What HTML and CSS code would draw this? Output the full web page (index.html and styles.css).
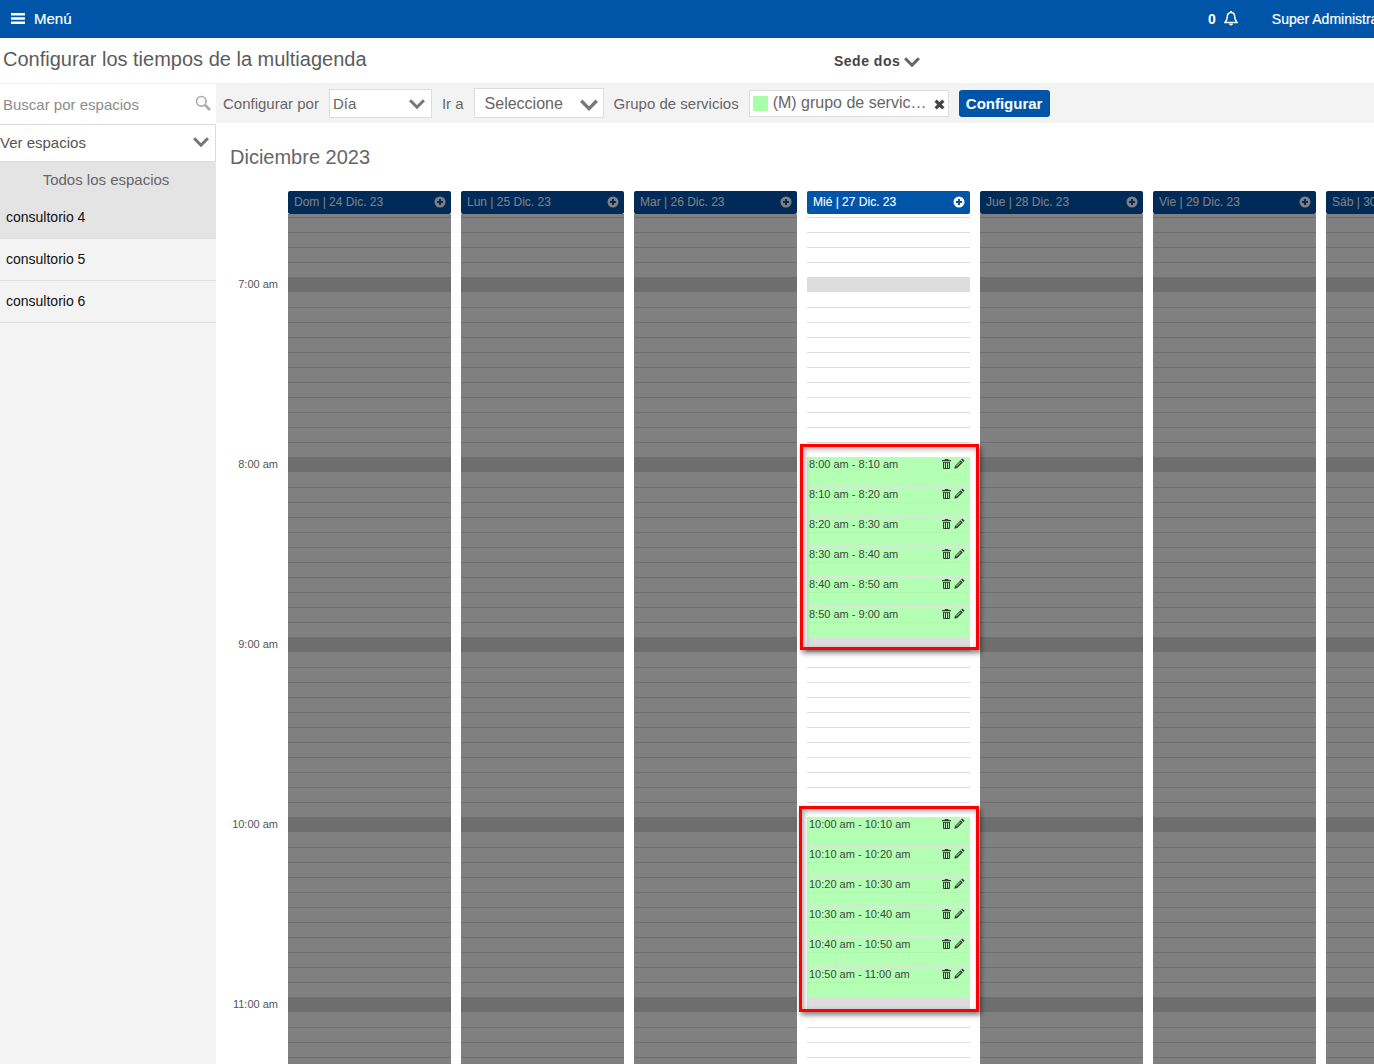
FILE: index.html
```html
<!DOCTYPE html>
<html lang="es">
<head>
<meta charset="utf-8">
<title>Configurar los tiempos de la multiagenda</title>
<link rel="stylesheet" href="styles.css">
</head>
<body>
<svg class="defs" width="0" height="0" aria-hidden="true">
  <symbol id="chev" viewBox="0 0 16 10"><path d="M1.100 1.200 8 8.200l6.900-7" fill="none" stroke="currentColor" stroke-width="3"/></symbol>
  <symbol id="plus" viewBox="0 0 12 12"><path fill-rule="evenodd" fill="currentColor" d="M6 .5a5.500 5.500 0 1 0 0 11 5.500 5.500 0 0 0 0-11zM5 3h2v2h2v2H7v2H5V7H3V5h2z"/></symbol>
  <symbol id="trash" viewBox="0 0 9 10"><path fill="currentColor" fill-rule="evenodd" d="M3 0h3l.5 1H9v1.200H0V1h2.500zM1 3h7v6.200L7.300 10H1.700L1 9.200zM2 3.800v5.300h.9V3.800zM4 3.800v5.300h1V3.800zM6.100 3.800v5.300H7V3.800z"/></symbol>
  <symbol id="pencil" viewBox="0 0 11 11"><path fill="currentColor" fill-rule="evenodd" d="M8.300.4l2.300 2.300-1.200 1.200-2.300-2.300zM6.500 2.200l2.300 2.300-5.600 5.600-2.900.7.700-2.900zM6.300 3.700L2 8l.5.500 4.300-4.300z"/></symbol>
</svg>

<header class="topbar">
  <div class="menu">
    <svg class="burger" viewBox="0 0 14 11" aria-hidden="true"><path fill="currentColor" d="M0 0h14v2.600H0zM0 4.200h14v2.600H0zM0 8.400h14V11H0z"/></svg>
    <span>Menú</span>
  </div>
  <div class="user">
    <span class="count">0</span>
    <svg class="bell" viewBox="0 0 14 15" aria-hidden="true"><path fill="none" stroke="currentColor" stroke-width="1.500" d="M7 1.500c-2.700 0-3.700 2-3.700 4.200 0 3-1.100 4.300-2.300 5.800h12c-1.200-1.500-2.300-2.800-2.300-5.800C10.700 3.500 9.700 1.500 7 1.500z"/><path fill="currentColor" d="M5 12.500h4a2 2 0 0 1-4 0zM6 0h2v1.500H6z"/></svg>
    <span class="name">Super Administrador</span>
  </div>
</header>

<div class="titlebar">
  <h1>Configurar los tiempos de la multiagenda</h1>
  <div class="sede">Sede dos <svg class="sede-chev"><use href="#chev"/></svg></div>
</div>

<div class="layout">
  <aside class="side">
    <div class="search">
      <span>Buscar por espacios</span>
      <svg class="lens" viewBox="0 0 16 16" aria-hidden="true"><circle cx="6.300" cy="6.300" r="4.800" fill="none" stroke="currentColor" stroke-width="1.600"/><path d="M10 10l5 5" stroke="currentColor" stroke-width="2.600"/></svg>
    </div>
    <div class="see">
      <span>Ver espacios</span>
      <svg class="side-chev"><use href="#chev"/></svg>
    </div>
    <div class="all">Todos los espacios</div>
    <ul class="rooms">
      <li class="room active">consultorio 4</li>
      <li class="room">consultorio 5</li>
      <li class="room">consultorio 6</li>
    </ul>
  </aside>

  <main class="content">
    <div class="tools">
      <span class="lbl">Configurar por</span>
      <div class="sel sel-day">Día <svg class="sel-chev"><use href="#chev"/></svg></div>
      <span class="lbl">Ir a</span>
      <div class="sel sel-go">Seleccione <svg class="sel-chev"><use href="#chev"/></svg></div>
      <span class="lbl">Grupo de servicios</span>
      <div class="group">
        <i class="swatch"></i>
        <span class="group-text">(M) grupo de servicios</span>
        <svg class="close" viewBox="0 0 10 10" aria-hidden="true"><path d="M1.500 1.500l7 7M8.500 1.500l-7 7" stroke="currentColor" stroke-width="3"/></svg>
      </div>
      <button class="go" type="button">Configurar</button>
    </div>

    <h2>Diciembre 2023</h2>

    <div class="cal">
      <div class="hours">
        <div class="hour">7:00 am</div>
        <div class="hour">8:00 am</div>
        <div class="hour">9:00 am</div>
        <div class="hour">10:00 am</div>
        <div class="hour">11:00 am</div>
      </div>

      <section class="day off">
        <div class="day-head"><span>Dom | 24 Dic. 23</span><svg class="add"><use href="#plus"/></svg></div>
        <div class="grid"></div>
      </section>
      <section class="day off">
        <div class="day-head"><span>Lun | 25 Dic. 23</span><svg class="add"><use href="#plus"/></svg></div>
        <div class="grid"></div>
      </section>
      <section class="day off">
        <div class="day-head"><span>Mar | 26 Dic. 23</span><svg class="add"><use href="#plus"/></svg></div>
        <div class="grid"></div>
      </section>

      <section class="day">
        <div class="day-head"><span>Mié | 27 Dic. 23</span><svg class="add"><use href="#plus"/></svg></div>
        <div class="grid">
          <div class="block block-am">
            <div class="slot"><span>8:00 am - 8:10 am</span><span class="acts"><svg class="ico-t"><use href="#trash"/></svg><svg class="ico-p"><use href="#pencil"/></svg></span></div>
            <div class="slot"><span>8:10 am - 8:20 am</span><span class="acts"><svg class="ico-t"><use href="#trash"/></svg><svg class="ico-p"><use href="#pencil"/></svg></span></div>
            <div class="slot"><span>8:20 am - 8:30 am</span><span class="acts"><svg class="ico-t"><use href="#trash"/></svg><svg class="ico-p"><use href="#pencil"/></svg></span></div>
            <div class="slot"><span>8:30 am - 8:40 am</span><span class="acts"><svg class="ico-t"><use href="#trash"/></svg><svg class="ico-p"><use href="#pencil"/></svg></span></div>
            <div class="slot"><span>8:40 am - 8:50 am</span><span class="acts"><svg class="ico-t"><use href="#trash"/></svg><svg class="ico-p"><use href="#pencil"/></svg></span></div>
            <div class="slot"><span>8:50 am - 9:00 am</span><span class="acts"><svg class="ico-t"><use href="#trash"/></svg><svg class="ico-p"><use href="#pencil"/></svg></span></div>
            <div class="mark mark-am"></div>
          </div>
          <div class="block block-pm">
            <div class="slot"><span>10:00 am - 10:10 am</span><span class="acts"><svg class="ico-t"><use href="#trash"/></svg><svg class="ico-p"><use href="#pencil"/></svg></span></div>
            <div class="slot"><span>10:10 am - 10:20 am</span><span class="acts"><svg class="ico-t"><use href="#trash"/></svg><svg class="ico-p"><use href="#pencil"/></svg></span></div>
            <div class="slot"><span>10:20 am - 10:30 am</span><span class="acts"><svg class="ico-t"><use href="#trash"/></svg><svg class="ico-p"><use href="#pencil"/></svg></span></div>
            <div class="slot"><span>10:30 am - 10:40 am</span><span class="acts"><svg class="ico-t"><use href="#trash"/></svg><svg class="ico-p"><use href="#pencil"/></svg></span></div>
            <div class="slot"><span>10:40 am - 10:50 am</span><span class="acts"><svg class="ico-t"><use href="#trash"/></svg><svg class="ico-p"><use href="#pencil"/></svg></span></div>
            <div class="slot"><span>10:50 am - 11:00 am</span><span class="acts"><svg class="ico-t"><use href="#trash"/></svg><svg class="ico-p"><use href="#pencil"/></svg></span></div>
            <div class="mark mark-pm"></div>
          </div>
        </div>
      </section>

      <section class="day off">
        <div class="day-head"><span>Jue | 28 Dic. 23</span><svg class="add"><use href="#plus"/></svg></div>
        <div class="grid"></div>
      </section>
      <section class="day off">
        <div class="day-head"><span>Vie | 29 Dic. 23</span><svg class="add"><use href="#plus"/></svg></div>
        <div class="grid"></div>
      </section>
      <section class="day off">
        <div class="day-head"><span>Sáb | 30 Dic. 23</span><svg class="add"><use href="#plus"/></svg></div>
        <div class="grid"></div>
      </section>
    </div>
  </main>
</div>
</body>
</html>
```
FILE: styles.css
```css
* { box-sizing: border-box; }
html, body { margin: 0; height: 1064px; overflow: hidden; }
body {
  width: 1374px;
  display: flex;
  flex-direction: column;
  font-family: "Liberation Sans", Arial, sans-serif;
  color: #555;
  background: #fff;
}
.defs { position: absolute; }

/* top bar */
.topbar {
  flex: none;
  height: 38px;
  padding-bottom: 1px;
  background: #0055a9;
  color: #fff;
  display: flex;
  align-items: center;
  justify-content: space-between;
  font-size: 14px;
  white-space: nowrap;
}
.menu { display: flex; align-items: center; gap: 9px; padding-left: 11px; font-size: 15px; -webkit-text-stroke: .2px #fff; }
.burger { width: 14px; height: 11px; margin-top: -1px; }
.user { display: flex; align-items: center; width: 166px; flex: none; overflow: hidden; -webkit-text-stroke: .2px #fff; }
.count { font-weight: bold; -webkit-text-stroke: 0; }
.bell { width: 14px; height: 15px; margin: 0 34px 0 8px; flex: none; }

/* title */
.titlebar { flex: none; height: 45px; display: flex; }
h1 {
  margin: 0;
  padding: 10px 0 0 3px;
  width: 834px;
  font-size: 20px;
  line-height: 23px;
  font-weight: normal;
  color: #5c5c5c;
}
.sede {
  padding-top: 15px;
  font-size: 14px;
  line-height: 17px;
  font-weight: bold;
  color: #444;
  display: flex;
  gap: 4px;
  letter-spacing: .5px;
}
.sede-chev { width: 16px; height: 10px; margin-top: 4px; color: #666; }

.layout { flex: 1; display: flex; min-height: 0; }

/* sidebar */
.side { flex: none; width: 216px; background: #f3f3f3; }
.search {
  height: 41px;
  background: #fff;
  border-top: 1px solid #f0f0f0;
  display: flex;
  align-items: center;
  justify-content: space-between;
  padding: 1px 4px 0 3px;
  font-size: 15px;
  color: #8c8c8c;
}
.lens { width: 16px; height: 16px; margin-top: -4px; margin-right: 1px; color: #aaa; }
.see {
  height: 38px;
  padding: 0 6px 2px 0;
  background: #fff;
  border: 1px solid #ddd;
  border-left: 0;
  display: flex;
  align-items: center;
  justify-content: space-between;
  font-size: 15px;
  color: #555;
}
.side-chev { width: 16px; height: 10px; margin-top: -1px; color: #777; }
.all {
  height: 35px;
  background: #e4e4e4;
  font-size: 15px;
  line-height: 36px;
  text-align: center;
  padding-right: 4px;
  color: #666;
}
.rooms { list-style: none; margin: 0; padding: 0; }
.room {
  height: 42px;
  padding: 12px 0 0 6px;
  font-size: 14px;
  line-height: 16px;
  color: #111;
  border-bottom: 1px solid #ddd;
}
.room.active { background: #e4e4e4; }

/* toolbar */
.content { flex: 1; min-width: 0; }
.tools {
  height: 40px;
  background: #f3f3f3;
  display: flex;
  align-items: center;
  padding-left: 7px;
  font-size: 15px;
  white-space: nowrap;
}
.lbl { color: #666; padding-top: 1px; }
.sel {
  height: 29px;
  background: #fff;
  border: 1px solid #ddd;
  display: flex;
  align-items: center;
  justify-content: space-between;
  color: #666;
}
.sel-day { width: 103px; margin: 0 10px; padding: 0 6px 0 3px; }
.sel-go { width: 130px; margin: 0 10px; padding: 2px 5px 0 10px; height: 30px; font-size: 16px; line-height: 20px; }
.sel-chev { width: 16px; height: 10px; color: #777; margin-top: 2px; }
.sel-go .sel-chev { width: 18px; height: 12px; margin-top: 2px; }
.group {
  width: 200px;
  height: 27px;
  margin: 0 10px;
  padding: 0 3px;
  background: #fff;
  border: 1px solid #ddd;
  display: flex;
  align-items: center;
  font-size: 16px;
  color: #666;
}
.swatch { flex: none; width: 15px; height: 15px; background: #a9ffa9; margin-right: 5px; }
.group-text { flex: 1; min-width: 0; overflow: hidden; text-overflow: ellipsis; }
.close { flex: none; width: 11px; height: 11px; margin: 2px 0 0 7px; color: #444; }
.go {
  width: 91px;
  height: 27px;
  padding: 0;
  border: 0;
  border-radius: 3px;
  background: #0055a9;
  color: #fff;
  font: bold 15px "Liberation Sans", Arial, sans-serif;
}

h2 {
  margin: 0;
  height: 68px;
  padding: 23px 0 0 14px;
  font-size: 20px;
  line-height: 23px;
  font-weight: normal;
  color: #666;
}

/* calendar */
.cal { display: flex; gap: 10px; height: 900px; }
.hours { flex: none; width: 62px; padding-top: 86px; }
.hour {
  height: 180px;
  font-size: 11px;
  line-height: 15px;
  text-align: right;
  color: #555;
}
.day { flex: none; width: 163px; }
.day-head {
  height: 23px;
  padding: 0 5px 2px 6px;
  background: #0055a9;
  color: #fff;
  border-radius: 2px;
  display: flex;
  align-items: center;
  justify-content: space-between;
  font-size: 12px;
  -webkit-text-stroke: .1px currentColor;
}
.add { width: 12px; height: 12px; }
.off .day-head { background: #002a58; color: #808080; }
.grid {
  --line: #ddd;
  --base: #fff;
  display: flow-root;
  height: 850px;
  background-color: var(--base);
  background-image:
    linear-gradient(to bottom, transparent 63px, var(--line) 63px, var(--line) 78px, var(--base) 78px, var(--base) 79px, transparent 79px),
    linear-gradient(to bottom, transparent 3px, var(--line) 3px, var(--line) 4px, transparent 4px);
  background-size: 100% 180px, 100% 15px;
}
.off .grid { --line: #6e6e6e; --base: #808080; }

.block { position: relative; height: 180px; }
.block-am { margin-top: 243px; }
.block-pm { margin-top: 180px; }
.slot {
  height: 30px;
  display: flex;
  justify-content: space-between;
  padding: 0 5px 0 2px;
  font-size: 11px;
  line-height: 15px;
  color: #444;
  background: linear-gradient(to bottom, #b3ffb3 15px, #aef8ae 15px, #aef8ae 16px, #b3ffb3 16px);
  border-bottom: 1px solid #dde6dd;
}
.slot:first-child { background: #b3ffb3; }
.slot:nth-child(6) { border-bottom: 0; }
.acts { display: flex; gap: 3px; color: #3a3a3a; }
.ico-t { width: 9px; height: 10px; margin-top: 2px; }
.ico-p { width: 11px; height: 11px; margin-top: 1px; }

.mark {
  position: absolute;
  border: 3px solid #f00;
  height: 206px;
  box-shadow: 2px 3px 5px rgba(0, 0, 0, .5), inset 2px 2px 5px rgba(0, 0, 0, .35);
  pointer-events: none;
}
.mark-am { top: -13px; left: -7px; width: 179px; }
.mark-pm { top: -11px; left: -8px; width: 180px; }
```
